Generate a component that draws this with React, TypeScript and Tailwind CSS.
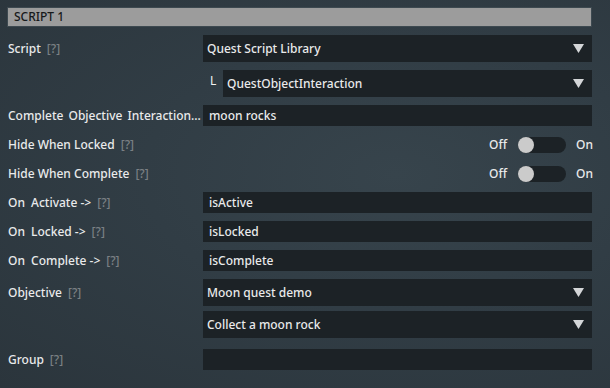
import React from 'react'

const Help = () => <span className="ml-[6px] text-[#7b8084]">[?]</span>

function Label({ children }: { children: React.ReactNode }) {
  return <div className="w-[203px] shrink-0 overflow-hidden whitespace-nowrap pl-[8px] pr-[1px]">{children}</div>
}

function Arrow() {
  return (
    <svg width="11" height="9" viewBox="0 0 11 9" className="mr-[8px] shrink-0">
      <polygon points="0,0 11,0 5.5,9" fill="#d4d6d8" />
    </svg>
  )
}

function Dropdown({ value }: { value: string }) {
  return (
    <div className="flex h-[27px] flex-1 items-center justify-between bg-[#1c2226] pl-[4px]">
      <span>{value}</span>
      <Arrow />
    </div>
  )
}

function Field({ value }: { value?: string }) {
  return <div className="flex h-[21px] flex-1 items-center bg-[#1c2226] pl-[6px]">{value}</div>
}

function Toggle() {
  return (
    <div className="flex flex-1 items-center justify-end">
      <span className="mr-[11px]">Off</span>
      <div className="flex h-[16px] w-[48px] items-center rounded-full bg-[#1c2226]">
        <div className="h-[16px] w-[16px] rounded-full bg-[#cbcbcb]" />
      </div>
      <span className="ml-[10px] w-[16px]">On</span>
    </div>
  )
}

function Event({ name }: { name: string }) {
  return (
    <Label>
      <span className="[word-spacing:3px]">On {name}</span> -&gt;
      <Help />
    </Label>
  )
}

export default function App() {
  return (
    <div
      className="h-[388px] w-[610px] overflow-hidden bg-[radial-gradient(ellipse_at_65%_45%,#37444c_0%,#313d45_45%,#2b353c_100%)] text-[12px] font-medium text-[#e9eaeb]"
      style={{ fontFamily: '"Noto Sans", "DejaVu Sans", sans-serif' }}
    >
      <div className="pr-[18px] pt-[7px]">
        <div className="ml-[7px] flex h-[20px] items-center border border-[#3d4950] bg-[#9c9c9c] pl-[6px] text-[#17191b]">
          SCRIPT 1
        </div>

        <div className="mt-[8px] flex items-center">
          <Label>
            Script<Help />
          </Label>
          <Dropdown value="Quest Script Library" />
        </div>

        <div className="mt-[8px] flex items-center">
          <div className="w-[210px] shrink-0" />
          <span className="w-[13px] pb-[6px] font-normal text-[#f2f2f2]">L</span>
          <Dropdown value="QuestObjectInteraction" />
        </div>

        <div className="mt-[8px] flex items-center">
          <Label>
            <span className="[word-spacing:2px]">Complete Objective Interaction...</span>
          </Label>
          <Field value="moon rocks" />
        </div>

        <div className="mt-[8px] flex h-[21px] items-center">
          <Label>
            Hide When Locked<Help />
          </Label>
          <Toggle />
        </div>

        <div className="mt-[8px] flex h-[21px] items-center">
          <Label>
            Hide When Complete<Help />
          </Label>
          <Toggle />
        </div>

        <div className="mt-[8px] flex items-center">
          <Event name="Activate" />
          <Field value="isActive" />
        </div>

        <div className="mt-[8px] flex items-center">
          <Event name="Locked" />
          <Field value="isLocked" />
        </div>

        <div className="mt-[8px] flex items-center">
          <Event name="Complete" />
          <Field value="isComplete" />
        </div>

        <div className="mt-[8px] flex items-center">
          <Label>
            Objective<Help />
          </Label>
          <Dropdown value="Moon quest demo" />
        </div>

        <div className="mt-[5px] flex items-center">
          <div className="w-[203px] shrink-0" />
          <Dropdown value="Collect a moon rock" />
        </div>

        <div className="mt-[11px] flex items-center">
          <Label>
            Group<Help />
          </Label>
          <Field />
        </div>
      </div>
    </div>
  )
}
